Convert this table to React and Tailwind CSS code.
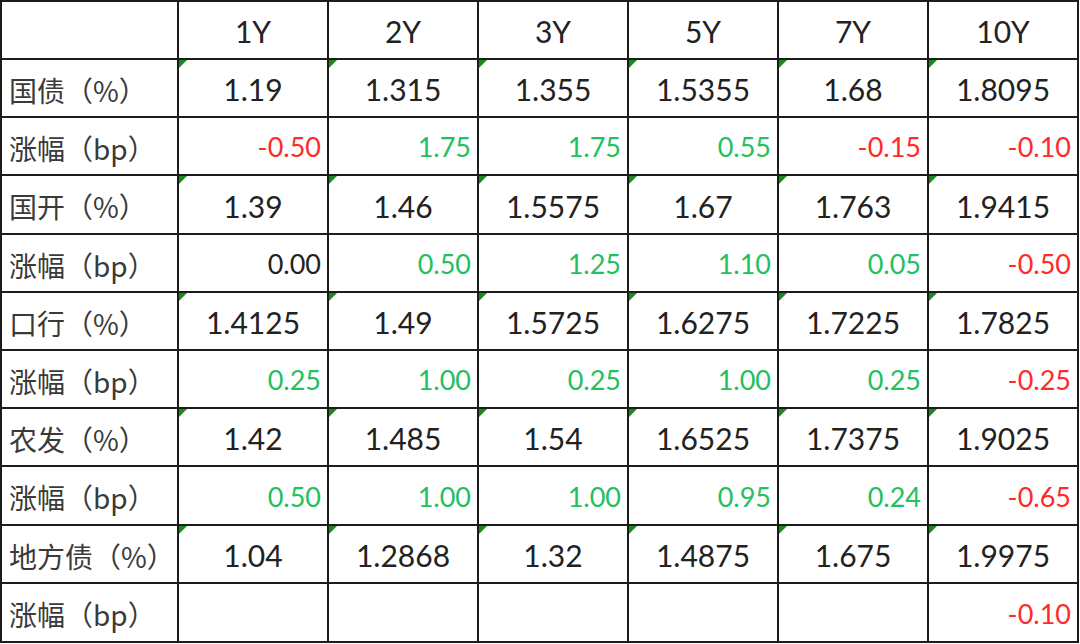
import React from "react";

const cols = ["1Y", "2Y", "3Y", "5Y", "7Y", "10Y"];

const rows = [
  { label: "国债（%）", kind: "pct", values: ["1.19", "1.315", "1.355", "1.5355", "1.68", "1.8095"] },
  { label: "涨幅（bp）", kind: "bp", values: ["-0.50", "1.75", "1.75", "0.55", "-0.15", "-0.10"] },
  { label: "国开（%）", kind: "pct", values: ["1.39", "1.46", "1.5575", "1.67", "1.763", "1.9415"] },
  { label: "涨幅（bp）", kind: "bp", values: ["0.00", "0.50", "1.25", "1.10", "0.05", "-0.50"] },
  { label: "口行（%）", kind: "pct", values: ["1.4125", "1.49", "1.5725", "1.6275", "1.7225", "1.7825"] },
  { label: "涨幅（bp）", kind: "bp", values: ["0.25", "1.00", "0.25", "1.00", "0.25", "-0.25"] },
  { label: "农发（%）", kind: "pct", values: ["1.42", "1.485", "1.54", "1.6525", "1.7375", "1.9025"] },
  { label: "涨幅（bp）", kind: "bp", values: ["0.50", "1.00", "1.00", "0.95", "0.24", "-0.65"] },
  { label: "地方债（%）", kind: "pct", values: ["1.04", "1.2868", "1.32", "1.4875", "1.675", "1.9975"] },
  { label: "涨幅（bp）", kind: "bp", values: ["", "", "", "", "", "-0.10"] },
];

// row heights so the lines land where the screenshot has them
const heights = ["h-[58px]", "h-[58px]", "h-[58px]", "h-[59px]", "h-[58px]", "h-[58px]", "h-[58px]", "h-[58px]", "h-[59px]", "h-[58px]", "h-[59px]"];

const bpColor = (v) => {
  if (v.startsWith("-")) return "text-[#ff2a2a]";
  if (v === "0.00") return "text-[#222]";
  return "text-[#22c05e]";
};

const Num = { fontFamily: "Lato, 'Noto Sans CJK SC', sans-serif" };
const Cjk = { fontFamily: "'Noto Sans CJK SC', 'Noto Sans', sans-serif" };

export default function App() {
  return (
    <div className="w-[1080px] h-[644px] bg-white overflow-hidden">
      <table className="table-fixed border-collapse w-[1079px]">
        <colgroup>
          <col className="w-[177px]" />
          {cols.map((c) => (
            <col key={c} className="w-[150px]" />
          ))}
        </colgroup>
        <thead>
          <tr className={heights[0]}>
            <th className="border-2 border-[#1c1c1c]"></th>
            {cols.map((c) => (
              <th
                key={c}
                style={Num}
                className="border-2 border-[#1c1c1c] text-center font-normal text-[30px] text-[#222] p-0 pt-[3px]"
              >
                {c}
              </th>
            ))}
          </tr>
        </thead>
        <tbody>
          {rows.map((r, i) => (
            <tr key={i} className={heights[i + 1]}>
              <td
                style={Cjk}
                className="border-2 border-[#1c1c1c] p-0 pl-[7px] pt-[3px] text-[28px] text-[#3a3a3a] whitespace-nowrap leading-none"
              >
                {r.label}
              </td>
              {r.values.map((v, j) =>
                r.kind === "pct" ? (
                  <td
                    key={j}
                    style={Num}
                    className="relative border-2 border-[#1c1c1c] text-center text-[30px] text-[#222] p-0 pt-[3px]"
                  >
                    <span className="absolute left-0 top-0 w-0 h-0 border-t-[8px] border-r-[8px] border-t-[#1a8a1a] border-r-transparent" />
                    {v}
                  </td>
                ) : (
                  <td
                    key={j}
                    style={Num}
                    className={`border-2 border-[#1c1c1c] text-right p-0 pr-[6px] pt-[3px] text-[27px] ${bpColor(v)}`}
                  >
                    {v}
                  </td>
                )
              )}
            </tr>
          ))}
        </tbody>
      </table>
    </div>
  );
}
